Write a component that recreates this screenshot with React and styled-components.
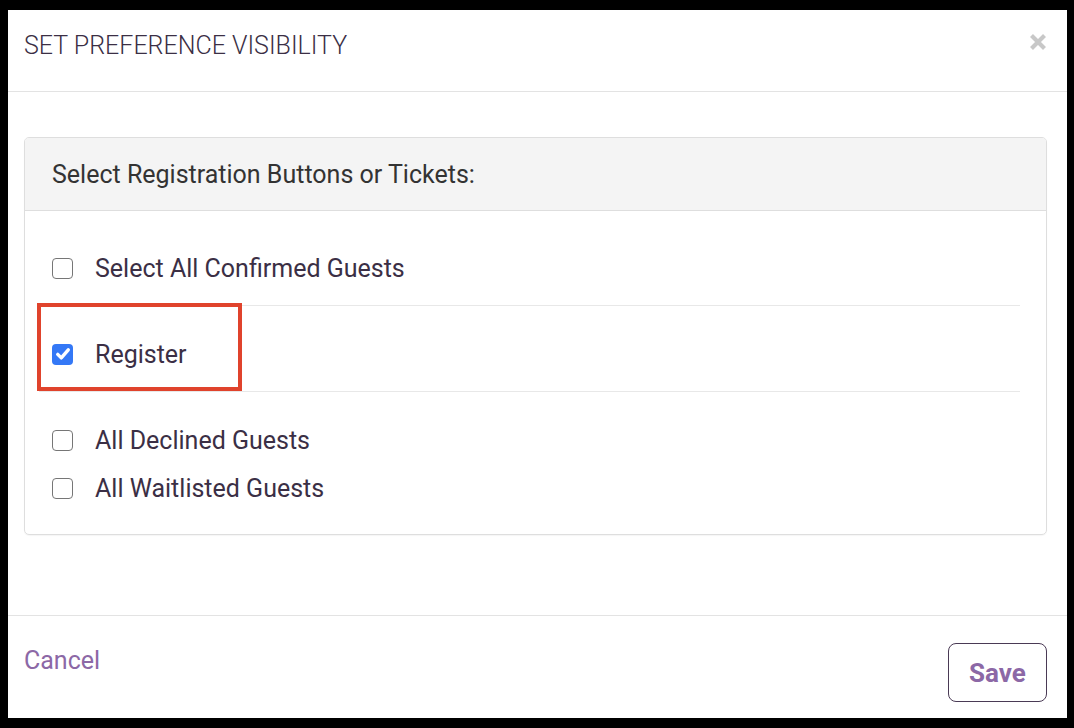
import React from "react";
import styled, { createGlobalStyle } from "styled-components";

const Global = createGlobalStyle`
  html, body { margin: 0; padding: 0; background: #000; }
  body { font-family: Roboto, "Liberation Sans", sans-serif; }
`;

const Modal = styled.div`
  margin: 10px 0 0 8px;
  width: 1059px;
  height: 708px;
  background: #fff;
  display: flex;
  flex-direction: column;
`;

const Header = styled.div`
  height: 81px;
  border-bottom: 1px solid #e3e3e3;
  display: flex;
  align-items: center;
  justify-content: space-between;
  padding: 0 20px 0 16px;
  box-sizing: content-box;
`;

const Title = styled.h4`
  margin: 0 0 10px;
  font-size: 25px;
  font-weight: 300;
  color: #3b2f45;
`;

const Close = styled.button`
  border: none;
  background: none;
  padding: 0;
  margin: 0 0 17px;
  width: 18px;
  height: 18px;
  cursor: pointer;
  display: flex;
  align-items: center;
  justify-content: center;
`;

const Body = styled.div`
  flex: 1;
  padding: 45px 20px 0 16px;
`;

const Panel = styled.div`
  border: 1px solid #dedede;
  border-radius: 5px;
  overflow: hidden;
  box-shadow: 0 1px 1px rgba(0, 0, 0, 0.04);
`;

const PanelHeading = styled.div`
  height: 72px;
  background: #f4f4f4;
  border-bottom: 1px solid #dedede;
  display: flex;
  align-items: center;
  padding-left: 27px;
  font-size: 25px;
  color: #333;
`;

const PanelBody = styled.div`
  position: relative;
  padding: 33px 0 22px 27px;
`;

const Row = styled.label`
  display: flex;
  align-items: center;
  height: 48px;
  gap: 22px;
  font-size: 25px;
  color: #3b2f45;
  cursor: pointer;
`;

const Box = styled.span`
  width: 21px;
  height: 21px;
  box-sizing: border-box;
  border-radius: 4px;
  border: ${(p) => (p.$checked ? "none" : "1.5px solid #767676")};
  background: ${(p) => (p.$checked ? "#3478f6" : "#fff")};
  display: flex;
  align-items: center;
  justify-content: center;
  flex-shrink: 0;
`;

const Divider = styled.hr`
  border: none;
  border-top: 1px solid #e8e8e8;
  margin: 13px 26px 24px -13px;
`;

const Highlight = styled.div`
  position: absolute;
  left: 12px;
  top: 92px;
  width: 205px;
  height: 88px;
  box-sizing: border-box;
  border: 4px solid #e0432c;
  pointer-events: none;
`;

const Footer = styled.div`
  height: 102px;
  border-top: 1px solid #e3e3e3;
  display: flex;
  justify-content: space-between;
  align-items: flex-start;
  padding: 0 20px 0 16px;
`;

const CancelLink = styled.a`
  margin-top: 30px;
  font-size: 25px;
  color: #8c68a6;
  text-decoration: none;
  cursor: pointer;
`;

const SaveButton = styled.button`
  margin-top: 27px;
  width: 99px;
  height: 59px;
  border: 1px solid #4a3a55;
  border-radius: 8px;
  background: #fff;
  font-family: Roboto, "Liberation Sans", sans-serif;
  font-size: 26px;
  font-weight: 700;
  color: #8c68a6;
  cursor: pointer;
`;

function Check({ checked }) {
  return (
    <Box $checked={checked}>
      {checked && (
        <svg width="16" height="16" viewBox="0 0 14 14">
          <path d="M2.4 7.3 L5.5 10.4 L11.6 3.4" fill="none" stroke="#fff" strokeWidth="3" strokeLinecap="round" strokeLinejoin="round" />
        </svg>
      )}
    </Box>
  );
}

export default function App() {
  return (
    <>
      <Global />
      <Modal>
        <Header>
          <Title>SET PREFERENCE VISIBILITY</Title>
          <Close aria-label="Close">
            <svg width="18" height="18" viewBox="0 0 18 18">
              <path d="M2.5 2.5 L15.5 15.5 M15.5 2.5 L2.5 15.5" stroke="#c8c8c8" strokeWidth="4.2" strokeLinecap="butt" />
            </svg>
          </Close>
        </Header>
        <Body>
          <Panel>
            <PanelHeading>Select Registration Buttons or Tickets:</PanelHeading>
            <PanelBody>
              <Row>
                <Check />
                Select All Confirmed Guests
              </Row>
              <Divider />
              <Row>
                <Check checked />
                Register
              </Row>
              <Divider />
              <Row>
                <Check />
                All Declined Guests
              </Row>
              <Row>
                <Check />
                All Waitlisted Guests
              </Row>
              <Highlight />
            </PanelBody>
          </Panel>
        </Body>
        <Footer>
          <CancelLink>Cancel</CancelLink>
          <SaveButton>Save</SaveButton>
        </Footer>
      </Modal>
    </>
  );
}
